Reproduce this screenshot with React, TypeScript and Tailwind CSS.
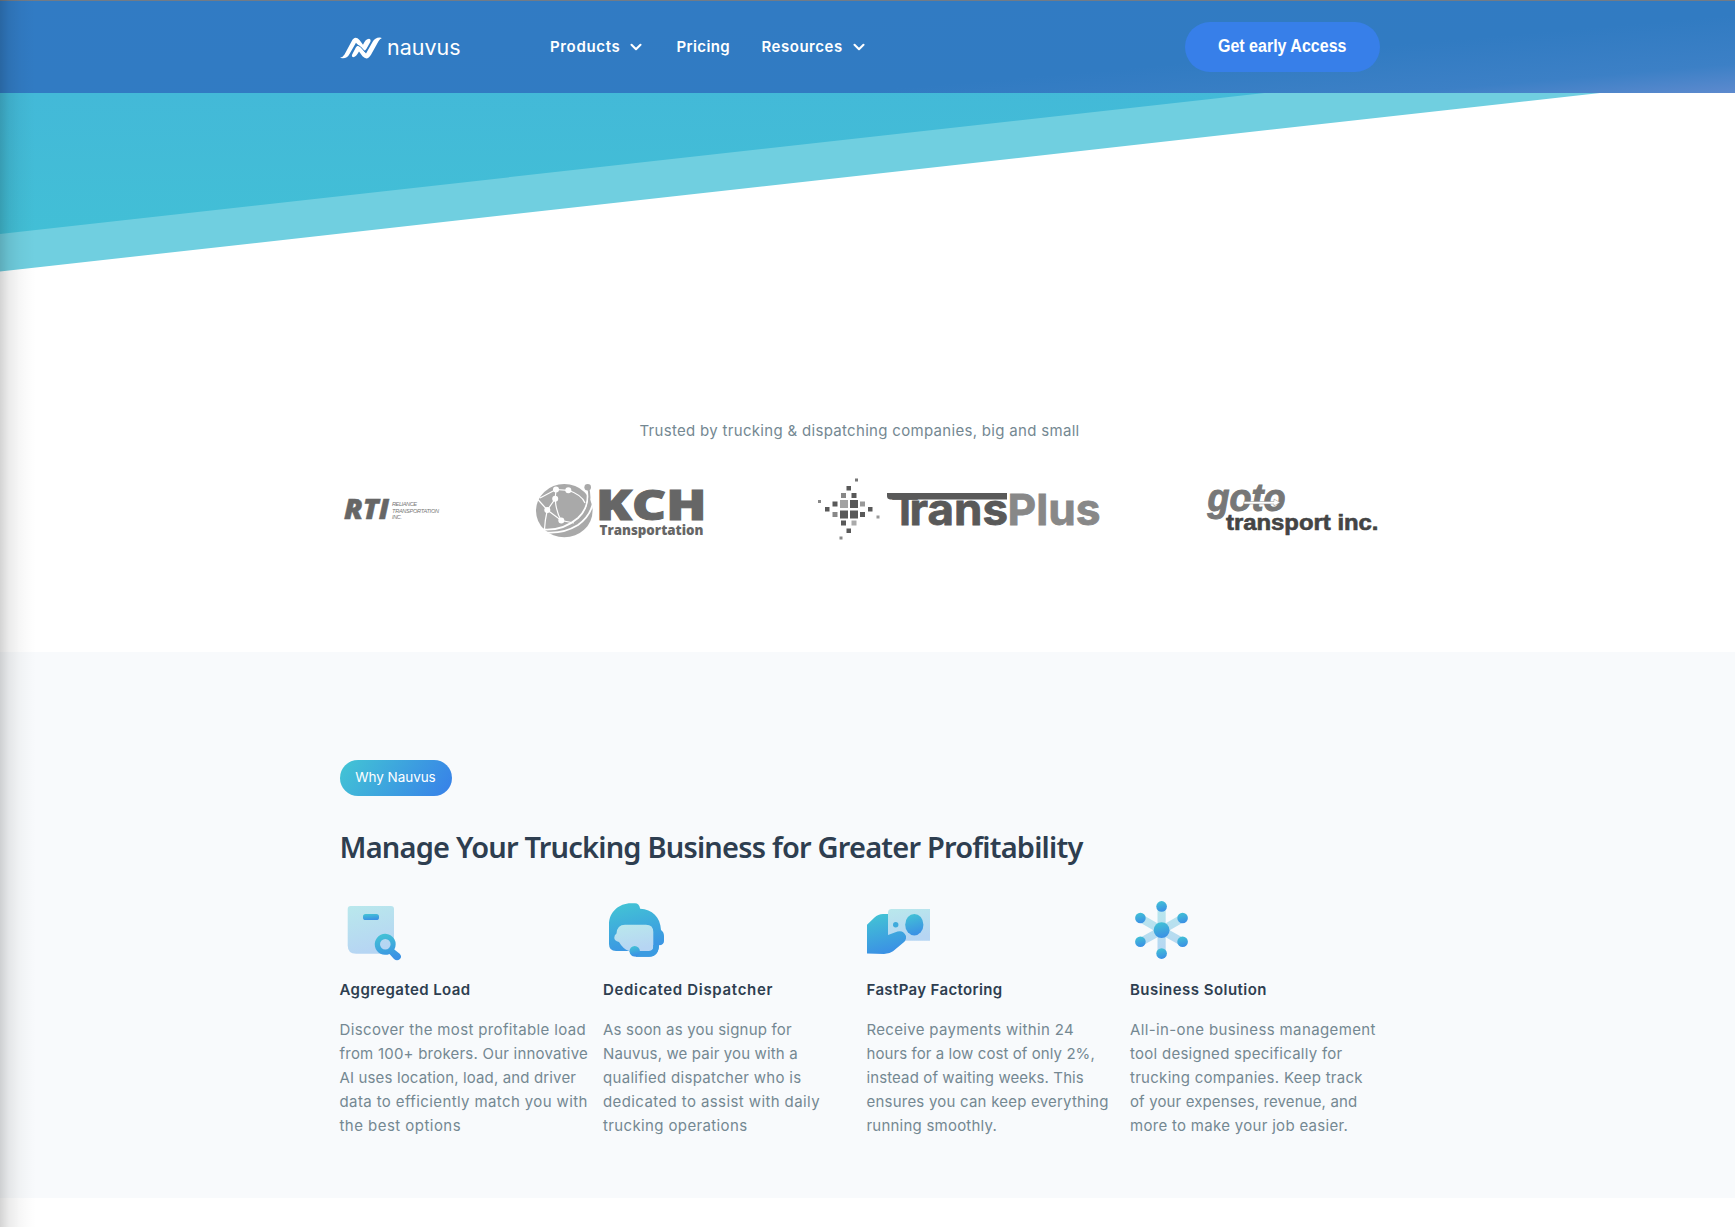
import React from "react";
import { ChevronDown } from "lucide-react";

function NauvusMark() {
  return (
    <svg width="42" height="24" viewBox="0 0 42 24" fill="#fff">
      <path d="M0.300 21.600Q3 21 4.500 18.500L11.500 5.500Q14.800 -1.200 19.500 4L23 8.800Q25.500 3 29 2.800Q31.300 3.200 30.300 6L26.500 12.800Q24.300 16.500 21.300 13L16 6.800L9.500 18Q7 22.600 2.500 22.300Q.3 22.200 .3 21.600Z" />
      <path d="M41.700 2.200Q40 2.600 38.500 5.300L31 18.800Q27.200 25.200 22.500 20.300L19 15.600Q16 21 13.200 21.300Q11.200 20.600 12.300 18.200L15.800 11.500Q17.800 8 20.800 11.500L26 17.600L32.500 6Q35 1.600 39.500 1.500Q41.700 1.500 41.700 2.200Z" />
      <path d="M15.900 8.300L20.300 10.600L25.500 16.300" stroke="#317bc2" strokeWidth="1" fill="none" />
    </svg>
  );
}

function Header() {
  return (
    <header className="relative h-[93px] border-t border-[#727b86] bg-[linear-gradient(175deg,#317bc4_0%,#317bc2_68%,#3c80c6_88%,#5d8ace_100%)] text-white">
      <div className="mx-auto flex h-full w-[1040px] translate-x-[-8px] items-center">
        <div className="flex w-[210.5px] items-center gap-[5px] pt-[2px]">
          <NauvusMark />
          <svg width="76" height="26" viewBox="0 0 76 26" className="overflow-visible">
            <text x="0" y="19.6" textLength="73.500" lengthAdjust="spacingAndGlyphs" fill="#fff" fontSize="20.500" fontFamily="Inter, sans-serif">nauvus</text>
          </svg>
        </div>
        <nav className="flex items-center font-['Inter',sans-serif] text-[15px] font-semibold tracking-[0.38px]">
          <a className="flex w-[126.500px] items-center gap-[7px] tracking-[0.66px]">Products<ChevronDown size={18} strokeWidth={2.800} /></a>
          <a className="w-[85px]">Pricing</a>
          <a className="flex items-center gap-[7px] tracking-[0.52px]">Resources<ChevronDown size={18} strokeWidth={2.800} /></a>
        </nav>
        <button className="mr-0 ml-auto flex h-[50px] w-[195px] items-center justify-center rounded-[25px] bg-[#377fe9] pb-[2px] font-['Liberation_Sans',sans-serif] text-[17.5px] font-bold">
          <span className="inline-block scale-x-[0.915] whitespace-nowrap">Get early Access</span>
        </button>
      </div>
    </header>
  );
}

function Hero() {
  return (
    <svg className="block" width="1735" height="179" viewBox="0 93 1735 179">
      <defs>
        <linearGradient id="teal" x1="0" y1="0" x2="0.12" y2="1">
          <stop offset="0" stopColor="#43b9d8" />
          <stop offset="1" stopColor="#42bfd6" />
        </linearGradient>
      </defs>
      <path d="M0 93H1600L0 271.500Z" fill="#70cfe0" />
      <path d="M0 93H1264.500L0 234Z" fill="url(#teal)" />
    </svg>
  );
}

function RtiLogo() {
  return (
    <svg width="102" height="30" viewBox="341 494 102 30" className="overflow-visible">
      <text x="344" y="519.2" textLength="45" lengthAdjust="spacingAndGlyphs" fontSize="28" fontWeight="800" fontStyle="italic" fontFamily="Open Sans, sans-serif" fill="#666" stroke="#666" strokeWidth=".5">RTI</text>
      <g fontSize="5.6" fontStyle="italic" fontFamily="Liberation Sans, sans-serif" fill="#777">
        <text x="392" y="506" textLength="25">RELIANCE</text>
        <text x="392" y="512.6" textLength="47">TRANSPORTATION</text>
        <text x="392" y="519.4" textLength="10">INC.</text>
      </g>
    </svg>
  );
}

function KchLogo() {
  return (
    <svg width="170" height="56" viewBox="535 483 170 56" className="overflow-visible">
      <ellipse cx="564.3" cy="510.7" rx="28.3" ry="26.6" fill="#a9a9a9" />
      <g stroke="#fff" fill="none" strokeWidth="1.2">
        <path d="M556 489.500L555.200 498.800L547.300 510M555.200 498.800Q556 512 561.300 520.500M568.300 490.300Q582 495 585 503M547.300 510L536.500 498M547.300 510Q545 520 544.500 529M547.300 510L561.300 520.500L574 523M556 489.500L568.300 490.300M540 498L556 489.500" />
        <path d="M587 489.500Q590 507 578 518Q563 531 543 529.500" strokeWidth="1.8" />
        <path d="M594 498Q592 515 578 525Q563 534 546 532.500" strokeWidth="1.8" />
      </g>
      <g fill="#fff"><circle cx="556" cy="489.500" r="3" /><circle cx="568.300" cy="490.300" r="3" /><circle cx="555.200" cy="498.800" r="3" /><circle cx="547.300" cy="510" r="3" /><circle cx="561.300" cy="520.500" r="3" /></g>
      <path d="M588 487Q592 502 585 514" stroke="#a9a9a9" strokeWidth="2" fill="none" />
      <circle cx="587.700" cy="487.300" r="3.300" fill="#a9a9a9" />
      <text x="596" y="520" textLength="110.500" lengthAdjust="spacingAndGlyphs" fontSize="42.500" fontWeight="800" fontFamily="Open Sans, sans-serif" fill="#666" stroke="#666" strokeWidth="1">KCH</text>
      <text x="599.5" y="534.5" textLength="104" lengthAdjust="spacingAndGlyphs" fontSize="13.5" fontWeight="800" fontFamily="Open Sans, sans-serif" fill="#666">Transportation</text>
    </svg>
  );
}

const pixels: [number, number, number, string][] = [
  [855, 478.5, 3, "#777"], [846.5, 486, 4.5, "#595959"], [841, 493, 5, "#888"], [851.5, 493, 5, "#595959"],
  [818, 500, 3, "#888"], [832.5, 501.5, 5, "#595959"], [840, 500, 8, "#a3a3a3"], [850, 500, 8, "#595959"], [860, 501.5, 5, "#999"],
  [825, 507, 4.5, "#595959"], [868, 507, 4.5, "#595959"], [832.5, 512, 5, "#888"], [840, 510.5, 8, "#595959"], [850, 510.5, 8, "#595959"], [860, 512, 5, "#595959"],
  [876.5, 515.5, 3, "#999"], [841, 520.5, 5, "#595959"], [851.5, 520.5, 5, "#aaa"], [846.5, 528.5, 4.5, "#595959"], [839.5, 536.5, 3, "#888"],
];

function TransPlusLogo() {
  return (
    <svg width="284" height="64" viewBox="817 477 284 64" className="overflow-visible">
      {pixels.map(([x, y, s, c], i) => (
        <rect key={i} x={x} y={y} width={s} height={s} fill={c} />
      ))}
      <path d="M887 493H1007V499.500H890Q887 499 887 496Z" fill="#595959" />
      <g fontFamily="Inter, sans-serif" fontWeight="700" fontSize="43" strokeWidth=".8">
        <text y="524.600" fill="#595959" stroke="#595959">
          <tspan x="891" textLength="28" lengthAdjust="spacingAndGlyphs">T</tspan>
          <tspan x="909.500" textLength="98.500" lengthAdjust="spacingAndGlyphs">rans</tspan>
        </text>
        <text x="1007.500" y="524.600" textLength="93" lengthAdjust="spacingAndGlyphs" fill="#888" stroke="#888">Plus</text>
      </g>
    </svg>
  );
}

function GotoLogo() {
  return (
    <svg width="174" height="56" viewBox="1206 481 174 56" className="overflow-visible">
      <text x="1207.500" y="510.500" textLength="78" lengthAdjust="spacingAndGlyphs" fontSize="38" fontWeight="700" fontStyle="italic" fontFamily="Liberation Sans, sans-serif" fill="#777" stroke="#777" strokeWidth="1">goto</text>
      <path d="M1244 501.500H1274V499L1280 502.500L1274 506V504H1244Z" fill="#fff" stroke="#888" strokeWidth=".5" />
      <text x="1226" y="529.500" textLength="152.500" lengthAdjust="spacingAndGlyphs" fontSize="22" fontWeight="700" fontFamily="Liberation Sans, sans-serif" fill="#444" stroke="#444" strokeWidth=".6">transport inc.</text>
    </svg>
  );
}

function Trusted() {
  return (
    <section className="h-[380px] pt-[147px]">
      <div className="mx-auto w-[1040px] translate-x-[-8px]">
        <p className="text-center font-['Inter',sans-serif] text-[15px] leading-6 tracking-[0.31px] text-[#748892]">Trusted by trucking &amp; dispatching companies, big and small</p>
        <div className="mt-[34px] flex h-16 w-[1040px] items-center">
          <div className="ml-px w-[194px]"><RtiLogo /></div>
          <div className="w-[282px] pt-[4px]"><KchLogo /></div>
          <div className="w-[389px]"><TransPlusLogo /></div>
          <div className="shrink-0"><GotoLogo /></div>
        </div>
      </div>
    </section>
  );
}

function Gradients() {
  return (
    <svg width="0" height="0" className="absolute">
      <defs>
        <linearGradient id="strong" x1="0" y1="0" x2=".25" y2="1"><stop offset="0" stopColor="#43c6d4" /><stop offset="1" stopColor="#3b92e4" /></linearGradient>
        <linearGradient id="pale" x1="0" y1="0" x2=".25" y2="1"><stop offset="0" stopColor="#b9e8ec" /><stop offset="1" stopColor="#b6d5f3" /></linearGradient>
        <linearGradient id="paleBars" gradientUnits="userSpaceOnUse" x1="28" y1="6" x2="34" y2="54"><stop offset="0" stopColor="#b9e8ec" /><stop offset="1" stopColor="#b6d5f3" /></linearGradient>
      </defs>
    </svg>
  );
}

function LoadIcon() {
  return (
    <svg width="64" height="64" viewBox="0 0 64 64">
      <path d="M10.700 6H51Q54 6 54 9V53.700H16Q7.700 53.700 7.700 45.500V9Q7.700 6 10.700 6Z" fill="url(#pale)" />
      <rect x="23" y="14" width="16" height="6" rx="2.600" fill="url(#strong)" />
      <path fillRule="evenodd" d="M45.300 33.800A10.500 10.500 0 0 1 54.300 49.500L59.700 53.700Q62.300 56.700 60 59Q57 61.500 54 59L49.500 53.900A10.500 10.500 0 1 1 45.300 33.800ZM45.300 39A5.300 5.300 0 1 0 45.300 49.600A5.300 5.300 0 1 0 45.300 39Z" fill="url(#strong)" />
    </svg>
  );
}

function DispatcherIcon() {
  return (
    <svg width="64" height="64" viewBox="0 0 64 64">
      <path d="M6 24.500C6 12 16 3.300 28 3.300H32Q36 3.300 37.200 8.700C49 9 57.500 17 58 30Q61 32 61 36V41Q61 45 56 45.300Q55.500 56.700 46 56.700H34Q27 56 26.700 51H13Q6 51 6 44Z" fill="url(#strong)" />
      <path d="M22 24.700H43Q50.300 24.700 50.300 32V47Q50.300 51 46 51H26Q20 49 16 42Q11 40.500 11.300 37.500Q11.300 35 13.500 33.500Q14 24.700 22 24.700Z" fill="url(#pale)" />
      <path d="M32 51H46Q50.300 51 50.300 46.500V45H56Q55.500 56.700 46 56.700H33Z" fill="#3b9be1" />
      <circle cx="31.700" cy="51.200" r="5.200" fill="url(#strong)" />
    </svg>
  );
}

function FactoringIcon() {
  return (
    <svg width="64" height="64" viewBox="0 0 64 64">
      <path d="M24.500 9H63V40.700H38L21 36V12.500Q21 9 24.500 9Z" fill="url(#pale)" />
      <path d="M0 24.700L7.500 17.500Q11 14 16 14H21V35L30.500 31.600Q36.500 30 39 36V38.500Q38.500 41 36.500 42.600L26 51.300Q22.500 54 17 54L0 53.500Z" fill="url(#strong)" />
      <ellipse cx="47.300" cy="24.700" rx="9.100" ry="10.800" fill="url(#strong)" />
      <circle cx="28.700" cy="24.700" r="2.700" fill="#3fabdc" />
    </svg>
  );
}

function SolutionIcon() {
  return (
    <svg width="64" height="64" viewBox="0 0 64 64">
      <path d="M27.500 6h8.200v17.200L50.500 14.700l4 7L39.700 30.200L54.500 38.500l-4 7L35.700 37.200V54h-8.200V37.200L12.600 45.500l-4-7L23.400 30.200L8.600 21.700l4-7L27.500 23.200Z" fill="url(#paleBars)" />
      <circle cx="31.600" cy="30.200" r="7.900" fill="url(#strong)" />
      {[[31.6, 6.4], [10.4, 18], [52.6, 18], [10.4, 41.8], [52.6, 41.8], [31.6, 53.6]].map(([x, y]) => (
        <circle key={x + "-" + y} cx={x} cy={y} r="5.300" fill="url(#strong)" />
      ))}
    </svg>
  );
}

type Line = [text: string, tracking: string];

const features: { icon: React.ReactNode; title: Line; lines: Line[] }[] = [
  {
    icon: <LoadIcon />,
    title: ["Aggregated Load", "tracking-[0.42px]"],
    lines: [
      ["Discover the most profitable load", "tracking-[0.36px]"],
      ["from 100+ brokers. Our innovative", "tracking-[0.22px]"],
      ["AI uses location, load, and driver", "tracking-[0.14px]"],
      ["data to efficiently match you with", "tracking-[0.39px]"],
      ["the best options", "tracking-[0.46px]"],
    ],
  },
  {
    icon: <DispatcherIcon />,
    title: ["Dedicated Dispatcher", "tracking-[0.67px]"],
    lines: [
      ["As soon as you signup for", "tracking-[0.20px]"],
      ["Nauvus, we pair you with a", "tracking-[0.14px]"],
      ["qualified dispatcher who is", "tracking-[0.30px]"],
      ["dedicated to assist with daily", "tracking-[0.40px]"],
      ["trucking operations", "tracking-[0.37px]"],
    ],
  },
  {
    icon: <FactoringIcon />,
    title: ["FastPay Factoring", "tracking-[0.36px]"],
    lines: [
      ["Receive payments within 24", "tracking-[0.33px]"],
      ["hours for a low cost of only 2%,", "tracking-[0.08px]"],
      ["instead of waiting weeks. This", "tracking-[0.11px]"],
      ["ensures you can keep everything", "tracking-[0.22px]"],
      ["running smoothly.", "tracking-[0.22px]"],
    ],
  },
  {
    icon: <SolutionIcon />,
    title: ["Business Solution", "tracking-[0.46px]"],
    lines: [
      ["All-in-one business management", "tracking-[0.38px]"],
      ["tool designed specifically for", "tracking-[0.27px]"],
      ["trucking companies. Keep track", "tracking-[0.28px]"],
      ["of your expenses, revenue, and", "tracking-[0.13px]"],
      ["more to make your job easier.", "tracking-[0.30px]"],
    ],
  },
];

function Why() {
  return (
    <section className="h-[546px] bg-[#f8fafc] pt-[108px]">
      <Gradients />
      <div className="mx-auto w-[1040px] translate-x-[-8px]">
        <div className="flex h-9 w-[112px] items-center justify-center rounded-full bg-[linear-gradient(125deg,#43c6d4,#377fe9)] pb-[2px] font-['Inter',sans-serif] text-[13.5px] tracking-[-0.05px] text-white">Why Nauvus</div>
        <h2 className="mt-[31px] font-['Noto_Sans',sans-serif] text-[29px] leading-10 font-semibold tracking-[-0.8px] whitespace-nowrap text-[#2e3e50]">Manage Your Trucking Business for Greater Profitability</h2>
        <div className="mt-[33px] grid w-[1054px] grid-cols-4 font-['Inter',sans-serif] text-[15px] leading-6">
          {features.map(({ icon, title, lines }) => (
            <div key={title[0]}>
              {icon}
              <h3 className={`mt-[14px] font-semibold text-[#2e3e50] ${title[1]}`}>{title[0]}</h3>
              <p className="mt-4 whitespace-nowrap text-[#748892]">
                {lines.map(([text, tracking]) => (
                  <span key={text} className={`block ${tracking}`}>{text}</span>
                ))}
              </p>
            </div>
          ))}
        </div>
      </div>
    </section>
  );
}

export default function App() {
  return (
    <div className="relative h-[1227px] w-[1735px] overflow-hidden bg-white">
      <Header />
      <Hero />
      <Trusted />
      <Why />
      <div className="pointer-events-none absolute inset-y-0 left-0 w-9 bg-[linear-gradient(90deg,rgba(0,0,0,0.17),rgba(0,0,0,0.08)_25%,rgba(0,0,0,0.03)_55%,rgba(0,0,0,0.008)_85%,transparent)]" />
    </div>
  );
}
